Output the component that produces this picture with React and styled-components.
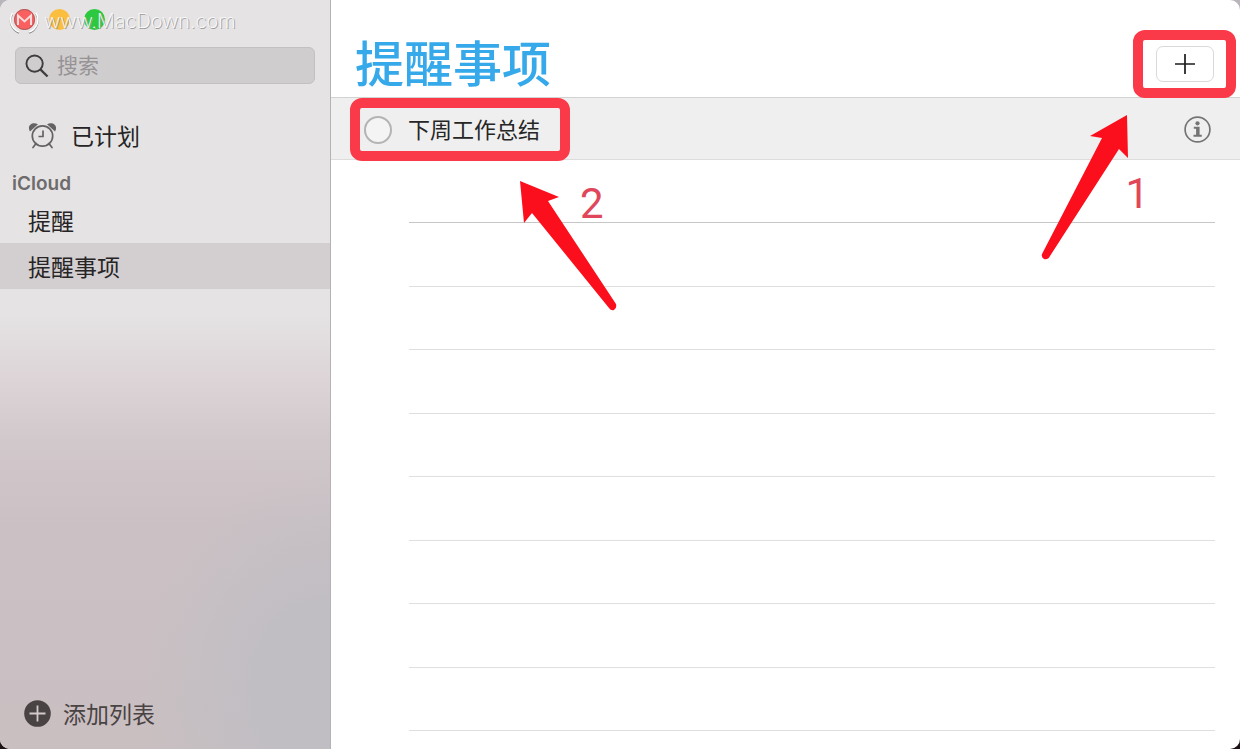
import styled, { createGlobalStyle } from 'styled-components';

const GlobalStyle = createGlobalStyle`
  * {
    box-sizing: border-box;
  }
  body {
    margin: 0;
    background: linear-gradient(#b9b5bb, #1c1214);
    font-family: "Inter", "Noto Sans CJK SC", sans-serif;
  }
  button, input {
    font: inherit;
    color: inherit;
    margin: 0;
  }
`;

const Window = styled.div`
  display: flex;
  min-height: 100vh;
  border-radius: 10px;
  overflow: hidden;
  background: #fff;
`;

const Sidebar = styled.aside`
  flex: none;
  width: 331px;
  display: flex;
  flex-direction: column;
  border-right: 1px solid #b5b1b4;
  background:
    radial-gradient(ellipse 190px 220px at 100% 92%, #c1bec3 40%, rgba(193, 190, 195, 0)),
    linear-gradient(#e5e3e4 0%, #e5e3e4 42%, #ddd5d8 50%, #d1c8cb 59%, #cbc1c5 70%, #c9bfc1 100%);
`;

const TitleBar = styled.div`
  position: relative;
  display: flex;
  gap: 14px;
  height: 47px;
  padding: 9px 14px;
`;

const Light = styled.span`
  width: 21px;
  height: 21px;
  border-radius: 50%;
  background: ${(props) => props.$color};
`;

const Watermark = styled.div`
  position: absolute;
  left: 9px;
  top: 5px;
  display: flex;
  align-items: center;
  gap: 5px;
  height: 32px;
  color: #fbfbfb;
  font-size: 20px;
  font-weight: 200;
  text-shadow: 1px 1px 0 #9b9b9b;
`;

const Search = styled.label`
  display: flex;
  align-items: center;
  gap: 8px;
  height: 37px;
  margin: 0 15px;
  padding: 0 9px;
  border: 1px solid #c3c0c2;
  border-radius: 6px;
  background: #d0cdcf;
`;

const SearchInput = styled.input`
  flex: 1;
  min-width: 0;
  padding: 0;
  border: 0;
  outline: 0;
  background: none;
  font-size: 21px;
  line-height: 30px;
  &::placeholder {
    color: #969395;
    opacity: 1;
  }
`;

const Nav = styled.nav`
  display: flex;
  flex-direction: column;
  padding-top: 28px;
`;

const NavItem = styled.button`
  display: flex;
  align-items: center;
  gap: 14px;
  height: 46px;
  padding: 0 28px;
  border: 0;
  background: ${(props) => (props.$active ? '#d3cfd1' : 'none')};
  color: #262425;
  font-size: 23px;
  text-align: left;
`;

const Group = styled.h2`
  margin: 0;
  padding: 9px 12px 0;
  height: 39px;
  color: #6d6b6c;
  font-size: 19px;
  line-height: 34px;
  font-weight: 600;
`;

const AddList = styled.button`
  display: flex;
  align-items: center;
  gap: 12px;
  height: 46px;
  margin-top: auto;
  margin-bottom: 13px;
  padding: 0 24px;
  border: 0;
  background: none;
  color: #4a4344;
  font-size: 23px;
`;

const Main = styled.main`
  flex: 1;
  min-width: 0;
`;

const Header = styled.header`
  display: flex;
  justify-content: space-between;
  height: 98px;
  padding: 30px 4px 0 24px;
  border-bottom: 1px solid #d2d2d2;
`;

const Title = styled.h1`
  margin: 0;
  color: #36a9ea;
  font-size: 49px;
  line-height: 70px;
  font-weight: 500;
`;

const Frame = styled.div`
  position: relative;
  z-index: 1;
  display: flex;
  align-items: center;
  justify-content: ${(props) => (props.$center ? 'center' : 'flex-start')};
  gap: 16px;
  width: ${(props) => props.$width}px;
  height: ${(props) => props.$height}px;
  padding: 0 4px;
  border: 10px solid #fb3a49;
  border-radius: 12px;
`;

const AddButton = styled.button`
  display: flex;
  align-items: center;
  justify-content: center;
  width: 58px;
  height: 36px;
  padding: 0;
  border: 1px solid #d9d9d9;
  border-radius: 7px;
  background: #fff;
  color: #1b1b1b;
`;

const Reminder = styled.div`
  display: flex;
  align-items: center;
  justify-content: space-between;
  height: 62px;
  padding: 2px 29px 0 19px;
  border-bottom: 1px solid #dcdcdc;
  background: #efefef;
`;

const Check = styled.input`
  appearance: none;
  width: 28px;
  height: 28px;
  border: 2px solid #b4b4b4;
  border-radius: 50%;
  background: #f4f4f4;
`;

const ReminderText = styled.label`
  color: #262626;
  font-size: 22px;
  line-height: 32px;
  white-space: nowrap;
`;

const InfoButton = styled.button`
  display: flex;
  padding: 0;
  border: 0;
  background: none;
`;

const Lines = styled.div`
  position: relative;
  padding: 0 25px 0 78px;
`;

const Line = styled.div`
  height: 64px;
  border-bottom: 1px solid #dfdfdf;
  &:nth-child(odd) {
    height: 63px;
  }
  &:first-child {
    border-color: #c6c6c6;
  }
`;

const Arrow = styled.svg`
  position: absolute;
  top: ${(props) => props.$top}px;
  left: ${(props) => props.$left};
  right: ${(props) => props.$right};
  fill: #fc0f1d;
`;

const Step = styled.span`
  position: absolute;
  top: ${(props) => props.$top}px;
  left: ${(props) => props.$left};
  right: ${(props) => props.$right};
  color: #e0475a;
  font-family: Roboto, sans-serif;
  font-size: 42px;
  line-height: 50px;
`;

function AlarmIcon() {
  return (
    <svg width="29" height="27" viewBox="0 0 29 27" fill="none" stroke="#646263" strokeWidth="1.7">
      <circle cx="14.5" cy="14" r="10.2" />
      <path d="M15 8.500v6h-4.500" />
      <path d="M8 21.500l-3 4M21 21.500l3 4" strokeLinecap="round" />
      <path d="M2 9.500C-1.500 4 4 -1 10 2.200zM27 9.500C30.500 4 25 -1 19 2.200z" fill="#646263" stroke="none" />
    </svg>
  );
}

function App() {
  return (
    <>
      <GlobalStyle />
      <Window>
        <Sidebar>
          <TitleBar>
            <Light $color="#fb6060" />
            <Light $color="#fbbe3f" />
            <Light $color="#2bc840" />
            <Watermark>
              <svg width="30" height="32" viewBox="0 0 30 32" fill="none">
                <path d="M3.500 9A13 13 0 0 0 10 28M27 9A13 13 0 0 1 20 28" stroke="#858585" strokeWidth="1.500" />
                <path d="M3.500 8A13 13 0 0 0 10 27M27 8A13 13 0 0 1 20 27" stroke="#fff" strokeWidth="1.500" />
                <circle cx="15.500" cy="14.500" r="10" stroke="#a75a5c" />
                <path d="M9 20V10.500l6.500 6 6.500-6V20" stroke="#f8dcdc" strokeWidth="2" />
              </svg>
              www.MacDown.com
            </Watermark>
          </TitleBar>
          <Search>
            <svg width="24" height="24" viewBox="0 0 25 25" fill="none" stroke="#3f3d3e" strokeWidth="2">
              <circle cx="10" cy="10" r="8.500" />
              <path d="M16 16l7.500 7.500" strokeWidth="2.400" />
            </svg>
            <SearchInput type="search" placeholder="搜索" aria-label="搜索" />
          </Search>
          <Nav>
            <NavItem type="button">
              <AlarmIcon />
              已计划
            </NavItem>
            <Group>iCloud</Group>
            <NavItem type="button">提醒</NavItem>
            <NavItem type="button" $active>提醒事项</NavItem>
          </Nav>
          <AddList type="button">
            <svg width="27" height="27" viewBox="0 0 27 27">
              <circle cx="13.500" cy="13.500" r="13.300" fill="#4a4344" />
              <path d="M13.500 5.500v16M5.500 13.500h16" stroke="#d4cacc" strokeWidth="1.800" />
            </svg>
            添加列表
          </AddList>
        </Sidebar>
        <Main>
          <Header>
            <Title>提醒事项</Title>
            <Frame $center $width={103} $height={68}>
              <AddButton type="button" aria-label="添加提醒">
                <svg width="20" height="20" viewBox="0 0 20 20" stroke="currentColor" strokeWidth="1.700">
                  <path d="M10 0v20M0 10h20" />
                </svg>
              </AddButton>
            </Frame>
          </Header>
          <Reminder>
            <Frame $width={220} $height={63}>
              <Check type="checkbox" id="reminder" />
              <ReminderText htmlFor="reminder">下周工作总结</ReminderText>
            </Frame>
            <InfoButton type="button" aria-label="详细信息">
              <svg width="27" height="27" viewBox="0 0 27 27" fill="#747474">
                <circle cx="13.500" cy="13.500" r="12.400" fill="none" stroke="#747474" strokeWidth="1.700" />
                <circle cx="13.500" cy="7.300" r="2.100" />
                <path d="M9.800 10.800h5.800v8H17.800v2H9.500v-2h2.600v-6H9.800z" />
              </svg>
            </InfoButton>
          </Reminder>
          <Lines>
            {Array.from({ length: 9 }, (_, i) => (
              <Line key={i} />
            ))}
            <Arrow $top={20} $left="188px" width="100" height="132" viewBox="519 180 100 132">
              <path d="M520 181L559 197L548 201L616 304Q617 308 614 310Q611 311 609 308L532 213L524 223Z" />
            </Arrow>
            <Step $top={19} $left="249px">2</Step>
            <Arrow $top={-46} $right="111px" width="88" height="146" viewBox="1041 114 88 146">
              <path d="M1127 115L1128 158L1119 149L1050 256Q1048 260 1044 259Q1041 257 1042 254L1102 138L1090 136Z" />
            </Arrow>
            <Step $top={9} $right="91px">1</Step>
          </Lines>
        </Main>
      </Window>
    </>
  );
}

export default App;
